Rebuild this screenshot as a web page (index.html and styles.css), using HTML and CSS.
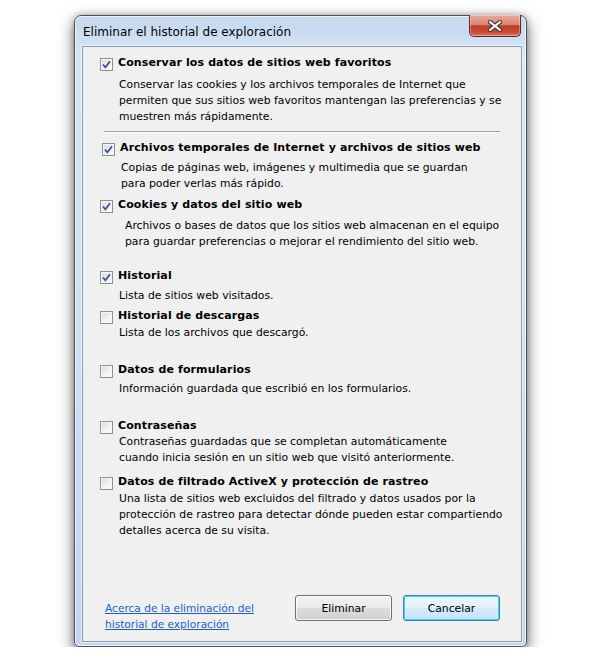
FILE: index.html
```html
<!DOCTYPE html>
<html lang="es">
<head>
<meta charset="utf-8">
<title>Eliminar el historial de exploración</title>
<link rel="stylesheet" href="styles.css">
</head>
<body>
<div class="stage">
  <div class="window">
    <div class="titlebar">
      <span class="title">Eliminar el historial de exploración</span>
      <span class="close">
        <svg width="18" height="12" viewBox="0 0 18 12">
          <path d="M4 2 L14 10 M14 2 L4 10" stroke="#3b3b3b" stroke-width="4.2" stroke-linecap="round"/>
          <path d="M4 2 L14 10 M14 2 L4 10" stroke="#ffffff" stroke-width="2.2" stroke-linecap="round"/>
        </svg>
      </span>
    </div>
    <div class="panel">
      <div class="opt opt-1">
        <div class="row"><span class="cb on"><svg width="11" height="11" viewBox="0 0 11 11"><path d="M2 5.5 L4.4 8.3 L9 2.2" fill="none" stroke="#3a52a0" stroke-width="1.8"/></svg></span><span class="head">Conservar los datos de sitios web favoritos</span></div>
        <p class="desc">Conservar las cookies y los archivos temporales de Internet que<br>permiten que sus sitios web favoritos mantengan las preferencias y se<br>muestren más rápidamente.</p>
      </div>
      <div class="sep"></div>
      <div class="opt opt-2">
        <div class="row"><span class="cb on"><svg width="11" height="11" viewBox="0 0 11 11"><path d="M2 5.5 L4.4 8.3 L9 2.2" fill="none" stroke="#3a52a0" stroke-width="1.8"/></svg></span><span class="head">Archivos temporales de Internet y archivos de sitios web</span></div>
        <p class="desc">Copias de páginas web, imágenes y multimedia que se guardan<br>para poder verlas más rápido.</p>
      </div>
      <div class="opt opt-3">
        <div class="row"><span class="cb on"><svg width="11" height="11" viewBox="0 0 11 11"><path d="M2 5.5 L4.4 8.3 L9 2.2" fill="none" stroke="#3a52a0" stroke-width="1.8"/></svg></span><span class="head">Cookies y datos del sitio web</span></div>
        <p class="desc">Archivos o bases de datos que los sitios web almacenan en el equipo<br>para guardar preferencias o mejorar el rendimiento del sitio web.</p>
      </div>
      <div class="opt opt-4">
        <div class="row"><span class="cb on"><svg width="11" height="11" viewBox="0 0 11 11"><path d="M2 5.5 L4.4 8.3 L9 2.2" fill="none" stroke="#3a52a0" stroke-width="1.8"/></svg></span><span class="head">Historial</span></div>
        <p class="desc">Lista de sitios web visitados.</p>
      </div>
      <div class="opt opt-5">
        <div class="row"><span class="cb"></span><span class="head">Historial de descargas</span></div>
        <p class="desc">Lista de los archivos que descargó.</p>
      </div>
      <div class="opt opt-6">
        <div class="row"><span class="cb"></span><span class="head">Datos de formularios</span></div>
        <p class="desc">Información guardada que escribió en los formularios.</p>
      </div>
      <div class="opt opt-7">
        <div class="row"><span class="cb"></span><span class="head">Contraseñas</span></div>
        <p class="desc">Contraseñas guardadas que se completan automáticamente<br>cuando inicia sesión en un sitio web que visitó anteriormente.</p>
      </div>
      <div class="opt opt-8">
        <div class="row"><span class="cb"></span><span class="head">Datos de filtrado ActiveX y protección de rastreo</span></div>
        <p class="desc">Una lista de sitios web excluidos del filtrado y datos usados por la<br>protección de rastreo para detectar dónde pueden estar compartiendo<br>detalles acerca de su visita.</p>
      </div>
      <div class="footer">
        <a class="link" href="#">Acerca de la eliminación del<br>historial de exploración</a>
        <div class="buttons">
          <button class="btn">Eliminar</button>
          <button class="btn btn-default">Cancelar</button>
        </div>
      </div>
    </div>
  </div>
</div>
</body>
</html>
```
FILE: styles.css
```css
html, body {
  margin: 0;
  padding: 0;
  background: #ffffff;
}
body {
  font-family: "DejaVu Sans", Verdana, sans-serif;
  font-size: 10.8px;
  color: #000;
}
.stage {
  padding: 15px 0 0 74px;
}
.window {
  width: 451px;
  border: 1px solid #4a4f55;
  border-radius: 7px 7px 5px 5px;
  background: linear-gradient(180deg, #c3d7ee 0%, #d6e5f5 6%, #cfe0f3 50%, #c0d5ee 100%);
  box-shadow: 0 6px 16px rgba(0,0,0,0.55), 0 0 6px rgba(0,0,0,0.25), inset 0 0 0 1px rgba(255,255,255,0.75);
  display: flex;
  flex-direction: column;
}
.titlebar {
  height: 30px;
  display: flex;
  justify-content: space-between;
  align-items: center;
}
.title {
  padding-left: 8px;
  font-size: 12px;
  color: #000;
  padding-top: 1px;
}
.close {
  align-self: flex-start;
  margin-top: -1px;
  margin-right: 5px;
  width: 50px;
  height: 21px;
  border: 1px solid #5a2a22;
  border-top: none;
  border-radius: 0 0 5px 5px;
  background: linear-gradient(180deg, #e8ab9c 0%, #d98472 45%, #c13b27 52%, #c84a33 80%, #d9755c 100%);
  box-shadow: inset 0 0 0 1px rgba(255,255,255,0.35);
  display: flex;
  align-items: center;
  justify-content: center;
}
.panel {
  margin: 0 4px 4px 7px;
  border: 1px solid #8a9aae;
  box-shadow: 0 0 0 1px rgba(255,255,255,0.6);
  background: #f0f0f0;
  padding: 8px 0 9px 17px;
  display: flex;
  flex-direction: column;
}
.opt { display: flex; flex-direction: column; }
.row {
  display: flex;
  align-items: center;
  height: 16px;
}
.cb {
  width: 11px;
  height: 11px;
  border: 1px solid #8e8f8f;
  background: linear-gradient(135deg, #d9d9d9 0%, #f2f2f2 60%, #fbfbfb 100%);
  box-shadow: inset 0 0 0 1px #f7f7f7;
  margin: 2px 5px 0 0;
  flex: none;
  display: flex;
  align-items: center;
  justify-content: center;
}
.cb svg { display: block; }
.head {
  font-weight: bold;
  font-size: 11px;
  line-height: 16px;
  white-space: nowrap;
  letter-spacing: 0.12px;
}
.desc {
  margin: 4px 0 0 19px;
  line-height: 16px;
  white-space: nowrap;
}
.sep {
  margin: 6px 21px 7px 4px;
  height: 1px;
  background: #a0a0a0;
  border-bottom: 1px solid #ffffff;
}
.opt-1 .desc { margin-top: 6px; }
.opt-2 .row { padding-left: 2px; }
.opt-2 .desc { margin-left: 21px; }
.opt-3 { margin-top: 5px; }
.opt-3 .desc { margin-top: 5px; margin-left: 25px; }
.opt-4 { margin-top: 18px; }
.opt-5 { margin-top: 4px; }
.opt-5 .desc { margin-top: 1px; }
.opt-6 { margin-top: 21px; }
.opt-6 .desc { margin-top: 3px; }
.opt-7 { margin-top: 21px; }
.opt-7 .desc { margin-top: 0; }
.opt-8 { margin-top: 8px; }
.opt-8 .desc { margin-top: 1px; }
.footer {
  margin-top: 56px;
  display: flex;
  justify-content: space-between;
  align-items: flex-start;
  padding-right: 21px;
}
.link {
  margin-top: 5px;
  margin-left: 5px;
  color: #1c5fc7;
  text-decoration: underline;
  line-height: 16px;
  font-size: 10.6px;
}
.buttons {
  display: flex;
  gap: 11px;
}
.btn {
  width: 97px;
  height: 26px;
  font-family: "DejaVu Sans", Verdana, sans-serif;
  font-size: 10.8px;
  color: #000;
  border: 1px solid #707070;
  border-radius: 3px;
  background: linear-gradient(180deg, #f2f2f2 0%, #ebebeb 48%, #dddddd 52%, #cfcfcf 100%);
  box-shadow: inset 0 0 0 1px rgba(255,255,255,0.8);
  padding: 0;
}
.btn-default {
  border-color: #3c7fb1;
  box-shadow: inset 0 0 0 1px #48d4fa;
  background: linear-gradient(180deg, #eaf6fd 0%, #e2f1fb 48%, #d4ebfa 52%, #c8e4f7 100%);
}
```
